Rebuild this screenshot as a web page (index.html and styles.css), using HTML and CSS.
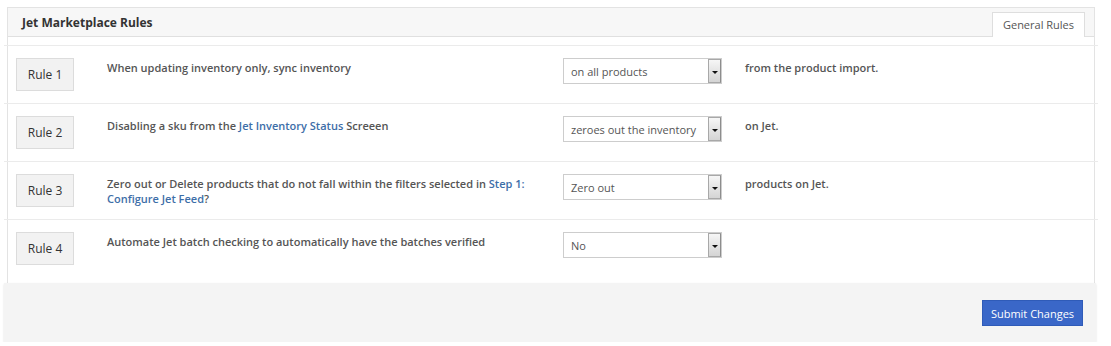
FILE: index.html
```html
<!DOCTYPE html>
<html lang="en">
<head>
    <meta charset="UTF-8">
    <title>Jet Marketplace Rules</title>
    <link rel="stylesheet" href="styles.css">
</head>
<body>
    <div class="panel">
        <div class="panel-heading">
            <span class="panel-title">Jet Marketplace Rules</span>
            <span class="tab">General Rules</span>
        </div>
        <div class="panel-body">
            <div class="rule-row">
                <button class="rule-btn">Rule 1</button>
                <div class="rule-desc">When updating inventory only, sync inventory</div>
                <div class="select"><span>on all products</span><i class="arrow"></i></div>
                <div class="rule-tail">from the product import.</div>
            </div>
            <div class="rule-row">
                <button class="rule-btn">Rule 2</button>
                <div class="rule-desc">Disabling a sku from the <a href="#">Jet Inventory Status</a> Screeen</div>
                <div class="select"><span>zeroes out the inventory</span><i class="arrow"></i></div>
                <div class="rule-tail">on Jet.</div>
            </div>
            <div class="rule-row">
                <button class="rule-btn">Rule 3</button>
                <div class="rule-desc">Zero out or Delete products that do not fall within the filters selected in <a href="#">Step 1:</a><br><a href="#">Configure Jet Feed</a>?</div>
                <div class="select"><span>Zero out</span><i class="arrow"></i></div>
                <div class="rule-tail">products on Jet.</div>
            </div>
            <div class="rule-row last">
                <button class="rule-btn">Rule 4</button>
                <div class="rule-desc">Automate Jet batch checking to automatically have the batches verified</div>
                <div class="select"><span>No</span><i class="arrow"></i></div>
                <div class="rule-tail"></div>
            </div>
        </div>
    </div>
    <div class="panel-footer">
        <button class="submit">Submit Changes</button>
    </div>
</body>
</html>
```

FILE: styles.css
```css
body {
    margin: 0;
    font-family: "Open Sans", Arial, sans-serif;
    background-color: #fff;
    color: #555;
}
.panel {
    margin: 7px 0 0 7px;
    width: 1088px;
    box-sizing: border-box;
    border: 1px solid #e3e3e3;
    border-bottom: none;
}
.panel-heading {
    height: 29px;
    box-sizing: border-box;
    background-color: #f7f7f7;
    border-bottom: 1px solid #e0e0e0;
    display: flex;
    justify-content: space-between;
    align-items: flex-end;
    padding: 0 9px 0 14px;
}
.panel-title {
    font-size: 12px;
    font-weight: 700;
    color: #333;
    align-self: center;
}
.tab {
    height: 25px;
    box-sizing: border-box;
    width: 93px;
    margin-bottom: -1px;
    background-color: #fff;
    border: 1px solid #dedede;
    border-bottom: none;
    font-size: 11px;
    color: #555;
    text-align: center;
    line-height: 24px;
}
.panel-body {
    padding-top: 8px;
}
.rule-row {
    display: grid;
    grid-template-columns: 91px 456px 182px 1fr;
    align-items: start;
    margin: 0 -4px;
    padding: 12px 4px 12px 12px;
    border-top: 1px solid #ebebeb;
}
.rule-row.last {
    padding-bottom: 18px;
}
.rule-btn {
    width: 58px;
    height: 33px;
    padding: 0;
    font-family: inherit;
    font-size: 12px;
    color: #333;
    background-color: #f2f2f2;
    border: 1px solid #dcdcdc;
}
.rule-desc {
    width: 420px;
    margin-top: 2px;
    font-size: 11px;
    font-weight: 600;
    line-height: 15px;
    color: #555;
}
.rule-desc a {
    color: #3d6ea8;
    text-decoration: none;
}
.rule-tail {
    margin-top: 2px;
    font-size: 11px;
    font-weight: 600;
    line-height: 15px;
    color: #555;
}
.select {
    width: 159px;
    height: 26px;
    box-sizing: border-box;
    border: 1px solid #cdcdcd;
    display: flex;
    align-items: center;
    justify-content: space-between;
    padding-left: 7px;
    font-size: 11px;
    color: #555;
    background-color: #fff;
}
.arrow {
    position: relative;
    width: 13px;
    height: 24px;
    box-sizing: border-box;
    border: 1px solid #a8a8a8;
    border-right-color: #8d8d8d;
    background: linear-gradient(#f6f6f6, #d4d4d4);
}
.arrow::after {
    content: "";
    position: absolute;
    left: 3px;
    top: 11px;
    border-left: 3px solid transparent;
    border-right: 3px solid transparent;
    border-top: 3px solid #111;
}
.panel-footer {
    margin-left: 4px;
    width: 1092px;
    height: 59px;
    box-sizing: border-box;
    background-color: #f4f4f4;
    box-shadow: 0 1px 2px rgba(0, 0, 0, 0.12);
    display: flex;
    justify-content: flex-end;
    align-items: flex-start;
    padding: 17px 13px 0 0;
}
.submit {
    width: 101px;
    height: 26px;
    padding: 0;
    font-family: inherit;
    font-size: 11px;
    color: #fff;
    background-color: #3a67c8;
    border: 1px solid #2f5bb8;
}
```
